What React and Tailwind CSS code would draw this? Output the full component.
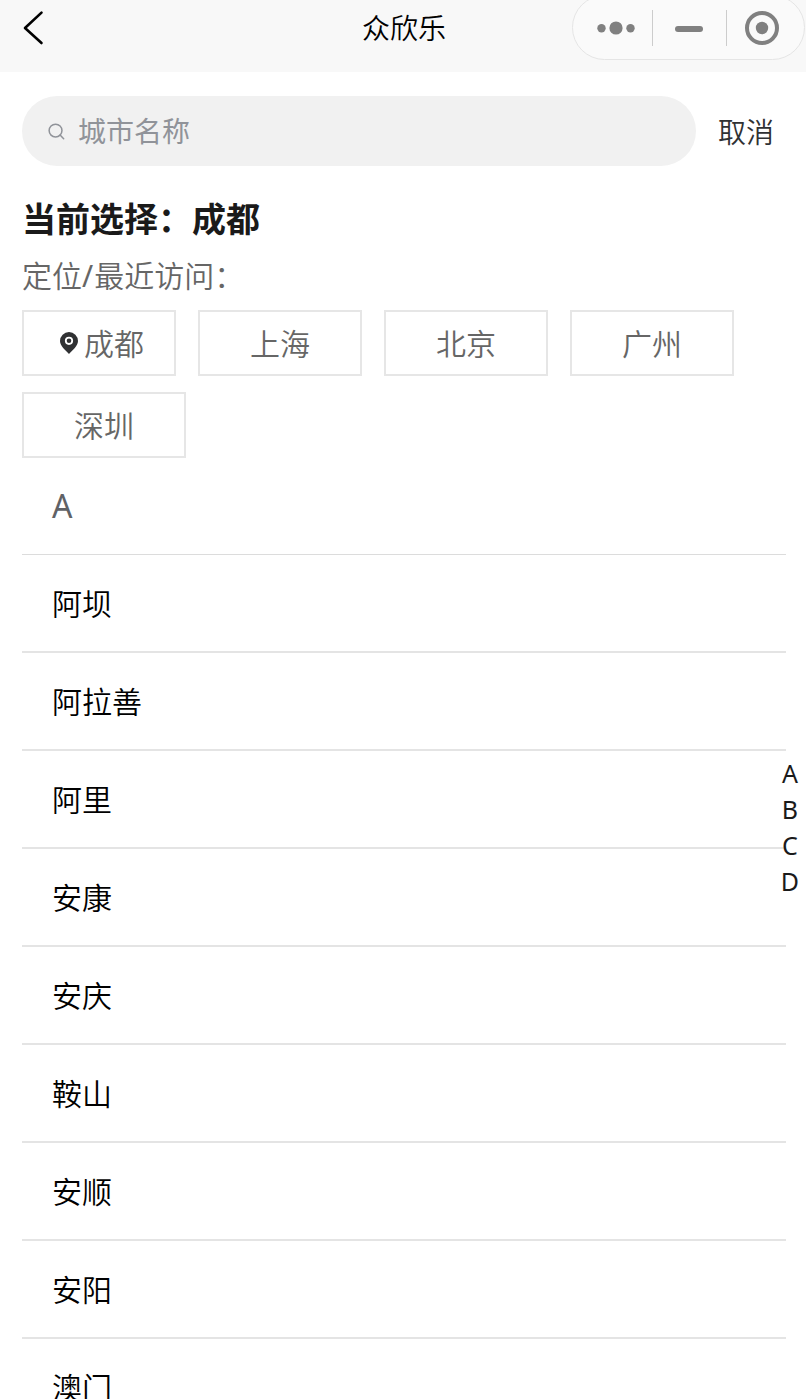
const recent = ['上海', '北京', '广州', '深圳'];
const cities = ['阿坝', '阿拉善', '阿里', '安康', '安庆', '鞍山', '安顺', '安阳', '澳门'];
const letters = ['A', 'B', 'C', 'D'];

function Header() {
  return (
    <header className="relative flex h-[72px] items-start justify-center bg-[#f8f8f8]">
      <svg className="absolute left-[20px] top-[8px]" width="28" height="40" viewBox="0 0 28 40" fill="none" stroke="#000" strokeWidth="2.6" strokeLinecap="round" strokeLinejoin="round">
        <path d="M21.500 4.600 5 20 21.500 35" />
      </svg>
      <h1 className="ml-[2px] mt-[8px] text-[28px] leading-[40px] text-black">众欣乐</h1>
      <svg className="absolute left-[571px] top-0" width="235" height="62" viewBox="0 0 235 62">
        <rect x="1.5" y="-4.5" width="232" height="64" rx="32" fill="#fafafa" stroke="#e5e5e5" />
        <path d="M81.5 10V46M155.5 10V46" stroke="#cccccc" />
        <g fill="#808080">
          <circle cx="30.5" cy="28.3" r="4.2" />
          <circle cx="45" cy="28" r="6.6" />
          <circle cx="59.5" cy="28.3" r="4.2" />
          <rect x="104" y="26" width="28" height="6" rx="3" />
          <circle cx="191" cy="28" r="6.2" />
        </g>
        <circle cx="191" cy="28" r="15" fill="none" stroke="#808080" strokeWidth="4" />
      </svg>
    </header>
  );
}

function SearchBar() {
  return (
    <div className="flex items-center">
      <div className="flex h-[70px] w-[674px] items-center rounded-full bg-[#f1f1f1] pl-[26px]">
        <svg width="17" height="17" viewBox="0 0 18 18" fill="none" stroke="#909399" strokeWidth="1.6" strokeLinecap="round">
          <circle cx="8" cy="8" r="6.8" />
          <path d="m12.8 12.8 3.800 3.800" />
        </svg>
        <span className="mb-[1px] ml-[13px] text-[28px] font-normal leading-[40px] text-[#909399]">城市名称</span>
      </div>
      <button className="ml-[22px] mt-[1px] text-[28px] font-[350] leading-[40px] text-[#303133]">取消</button>
    </div>
  );
}

function RecentCities() {
  return (
    <div className="mt-[12px] flex flex-wrap gap-x-[22px] gap-y-[16px] text-[30px] leading-[44px] text-[#666]">
      <div className="flex h-[66px] w-[154px] items-center justify-center border-2 border-[#e6e6e6] pl-[6px] pt-[2px]">
        <svg className="mb-[3px] mr-[6px]" width="18" height="22" viewBox="0 0 18 22">
          <path d="M9 0a9 9 0 0 0-9 9c0 5 5.5 9.200 9 13 3.500-3.800 9-8 9-13a9 9 0 0 0-9-9Z" fill="#303133" />
          <circle cx="9" cy="8.800" r="3.200" fill="none" stroke="#fff" strokeWidth="1.800" />
        </svg>
        成都
      </div>
      {recent.map((city) => (
        <div key={city} className="flex h-[66px] w-[164px] items-center justify-center border-2 border-[#e6e6e6] pt-[2px]">
          {city}
        </div>
      ))}
    </div>
  );
}

export default function App() {
  return (
    <div className="relative h-[1399px] w-[806px] overflow-hidden bg-white font-['Noto_Sans','Noto_Sans_CJK_SC',sans-serif] font-[350]">
      <Header />
      <main className="px-[22px] pt-[24px]">
        <SearchBar />
        <h2 className="mt-[29px] text-[34px] font-bold leading-[48px] text-[#1a1a1a]">当前选择：成都</h2>
        <p className="mt-[11px] text-[30px] leading-[44px] text-[#666]">
          定位<span className="mr-[1px] font-normal">/</span>最近访问：
        </p>
        <RecentCities />
        <section className="w-[764px]">
          <div className="flex h-[97px] items-center border-b border-[#dcdcdc] pl-[30px] text-[32px] font-normal text-[#606266]">A</div>
          <ul>
            {cities.map((city) => (
              <li key={city} className="flex h-[98px] items-center border-b-2 border-[#e4e4e4] pl-[30px] pt-[2px] text-[30px] leading-[44px] text-black">
                {city}
              </li>
            ))}
          </ul>
        </section>
      </main>
      <nav className="absolute left-[774px] top-[755px] flex w-[32px] flex-col items-center text-[25px] font-normal leading-[36px] text-[#1a1a1a]">
        {letters.map((letter) => (
          <span key={letter}>{letter}</span>
        ))}
      </nav>
    </div>
  );
}
